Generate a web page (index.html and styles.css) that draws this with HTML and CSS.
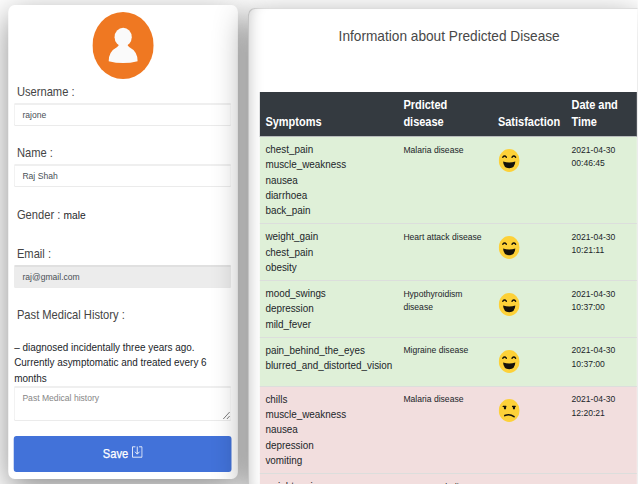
FILE: index.html
```html
<!DOCTYPE html>
<html lang="en">
<head>
<meta charset="utf-8">
<title>Patient profile</title>
<link rel="stylesheet" href="styles.css">
</head>
<body>
<svg class="defs" width="0" height="0">
  <symbol id="happy" viewBox="0 0 23 23">
    <circle cx="11.5" cy="11.5" r="11.4" fill="#fdd138"/>
    <path d="M4.5 8.2Q6.5 6 8.4 8.2M14.6 8.2Q16.6 6 18.5 8.2" fill="none" stroke="#15120a" stroke-width="1.5" stroke-linecap="round"/>
    <path d="M4.8 12.6Q11.5 14.6 18.2 12.6Q17.8 19.3 11.5 19.3Q5.2 19.3 4.8 12.6Z" fill="#15120a"/>
  </symbol>
  <symbol id="sad" viewBox="0 0 23 23">
    <circle cx="11.5" cy="11.5" r="11.4" fill="#fdd138"/>
    <path d="M4.8 7.4H8M18.2 7.4H15" fill="none" stroke="#15120a" stroke-width="1.1" stroke-linecap="round"/>
    <ellipse cx="6.9" cy="8.7" rx="1.3" ry="1.8" fill="#15120a"/>
    <ellipse cx="16.7" cy="8.7" rx="1.3" ry="1.8" fill="#15120a"/>
    <path d="M6.7 16.6Q12 14.4 16.8 17.7" fill="none" stroke="#15120a" stroke-width="1.6" stroke-linecap="round"/>
  </symbol>
</svg>
<main class="page">
  <section class="card profile">
    <svg class="avatar" viewBox="0 0 67 67">
      <circle cx="33.5" cy="33.5" r="33.5" fill="#ef7822"/>
      <circle cx="33.6" cy="25.2" r="9.4" fill="#fafafa"/>
      <path d="M29 32L38.2 32Q38.2 34 40.5 35.3Q49.4 39.5 49.4 49.2Q33.6 53 17.8 49.2Q17.8 39.5 26.7 35.3Q29 34 29 32Z" fill="#fafafa"/>
    </svg>
    <div class="label l-user">Username :</div>
    <div class="input">rajone</div>
    <div class="label l-name">Name :</div>
    <div class="input">Raj Shah</div>
    <div class="label l-gender">Gender : <span class="value">male</span></div>
    <div class="label l-email">Email :</div>
    <div class="input disabled">raj@gmail.com</div>
    <div class="label l-history">Past Medical History :</div>
    <p class="history">– diagnosed incidentally three years ago.<br>Currently asymptomatic and treated every 6<br>months</p>
    <div class="input area">Past Medical history
      <svg class="grip" viewBox="0 0 9 9"><path d="M1 8L8 1M5 8L8 5" stroke="#777" stroke-width="1" fill="none"/></svg>
    </div>
    <div class="save">Save
      <svg class="save-icon" viewBox="0 0 12 12"><path d="M4 .8H.8V11.2H11.2V.8H8M6 .5V8M3.5 5.7L6 8.2L8.5 5.7" fill="none" stroke="#e8eefb" stroke-width="1"/></svg>
    </div>
  </section>
  <section class="card results">
    <h1>Information about Predicted Disease</h1>
    <div class="table">
      <div class="row head"><div>Symptoms</div><div>Prdicted<br>disease</div><div>Satisfaction</div><div>Date and<br>Time</div></div>
      <div class="row good tall"><div>chest_pain<br>muscle_weakness<br>nausea<br>diarrhoea<br>back_pain</div><div class="small">Malaria disease</div><div><svg class="face"><use href="#happy"/></svg></div><div class="small">2021-04-30<br>00:46:45</div></div>
      <div class="row good"><div>weight_gain<br>chest_pain<br>obesity</div><div class="small">Heart attack disease</div><div><svg class="face"><use href="#happy"/></svg></div><div class="small">2021-04-30<br>10:21:11</div></div>
      <div class="row good"><div>mood_swings<br>depression<br>mild_fever</div><div class="small">Hypothyroidism<br>disease</div><div><svg class="face"><use href="#happy"/></svg></div><div class="small">2021-04-30<br>10:37:00</div></div>
      <div class="row good short"><div>pain_behind_the_eyes<br>blurred_and_distorted_vision</div><div class="small">Migraine disease</div><div><svg class="face"><use href="#happy"/></svg></div><div class="small">2021-04-30<br>10:37:00</div></div>
      <div class="row bad tall"><div>chills<br>muscle_weakness<br>nausea<br>depression<br>vomiting</div><div class="small">Malaria disease</div><div><svg class="face"><use href="#sad"/></svg></div><div class="small">2021-04-30<br>12:20:21</div></div>
      <div class="row bad last"><div>weight_gain</div><div class="small">Heart attack disease</div><div></div><div class="small">2021-04-30</div></div>
    </div>
  </section>
</main>
</body>
</html>
```
FILE: styles.css
```css
* { box-sizing: border-box; }
html, body { margin: 0; width: 638px; height: 484px; overflow: hidden; background: #fff; }
body { font-family: "Liberation Sans", Arial, sans-serif; font-size: 10.8px; color: #212529; }
.defs { display: block; }

/* The whole layout is condensed horizontally. */
.page {
  display: flex;
  align-items: flex-start;
  gap: 10.9px;
  width: 697.3px;
  height: 484px;
  padding: 5px 0 0 8.7px;
  overflow: hidden;
  transform: scaleX(.915);
  transform-origin: 0 0;
}
.card {
  flex: none;
  border-radius: 7px;
  background: #fff;
  box-shadow: 0 10px 34px rgba(0, 0, 0, .45);
}

.profile { width: 251.4px; height: 474px; padding: 7px 7px 0 6.8px; }
.avatar { display: block; width: 67px; height: 67px; margin: 0 auto 0 86px; }
.label { height: 18px; padding-left: 3px; font-size: 12.2px; line-height: 18px; color: #444; }
.l-user { margin: 4px 0 2px; }
.l-name { margin: 18px 0 2px; }
.l-gender { margin-top: 19px; }
.l-email { margin: 21px 0 2px; }
.l-history { margin-top: 18px; }
.value { font-size: 11.2px; color: #212529; }
.input {
  width: 237.2px;
  height: 23px;
  padding: 0 8px;
  border: 1px solid #ebebeb;
  border-top: 2px solid #efefef;
  border-radius: 2px;
  font-size: 9.4px;
  line-height: 20px;
  color: #495057;
}
.disabled { background: #ececec; border-top-color: #e0e0e0; }
.history { margin: 16px 0 0; font-size: 10.85px; line-height: 15.3px; white-space: nowrap; }
.area { position: relative; height: 35px; color: #868686; }
.grip { position: absolute; right: 0; bottom: 0; width: 9px; height: 9px; }
.save {
  display: flex;
  align-items: center;
  justify-content: center;
  gap: 4px;
  height: 36px;
  margin-top: 15px;
  border-radius: 3px;
  background: #4272d9;
  color: #fff;
  font-size: 12.2px;
  -webkit-text-stroke: .25px #fff;
}
.save-icon { width: 12px; height: 12px; margin-top: -3px; }

.results {
  position: relative;
  width: 426.3px;
  height: 476px;
  margin-top: 3px;
  padding-left: 13.1px;
  border-radius: 7px 0 0 0;
  overflow: hidden;
  box-shadow: 0 10px 34px rgba(0, 0, 0, .45), inset 14px 0 14px -12px rgba(0, 0, 0, .22), inset 1px 1px 0 #dedede;
}
h1 { margin: 0; padding: 17px 0 0 86px; height: 84px; font-size: 14.95px; line-height: 22px; font-weight: 400; color: #484848; }
.table { width: 412px; }
.row {
  display: grid;
  grid-template-columns: 150.8px 103.3px 80.4px 1fr;
  height: 56.8px;
  border-bottom: 1px solid #dcdedc;
  line-height: 15.35px;
  white-space: nowrap;
}
.row > div { padding: 5px 0 0 6px; }
.row > .small { font-size: 9.4px; line-height: 13.6px; padding-top: 5.6px; }
.tall { height: 87.2px; }
.short { height: 49px; }
.last { height: 11px; overflow: hidden; border-bottom: 0; }
.head {
  height: 45px;
  align-items: end;
  padding-bottom: 5px;
  background: #343a40;
  border-bottom-color: #b8bcbc;
  color: #fff;
  font-size: 12px;
  font-weight: 700;
  line-height: 17px;
}
.good { background: #dff0d8; }
.bad { background: #f2dede; }
.face { display: block; width: 23px; height: 23px; margin: 7px 0 0 1px; }
```
